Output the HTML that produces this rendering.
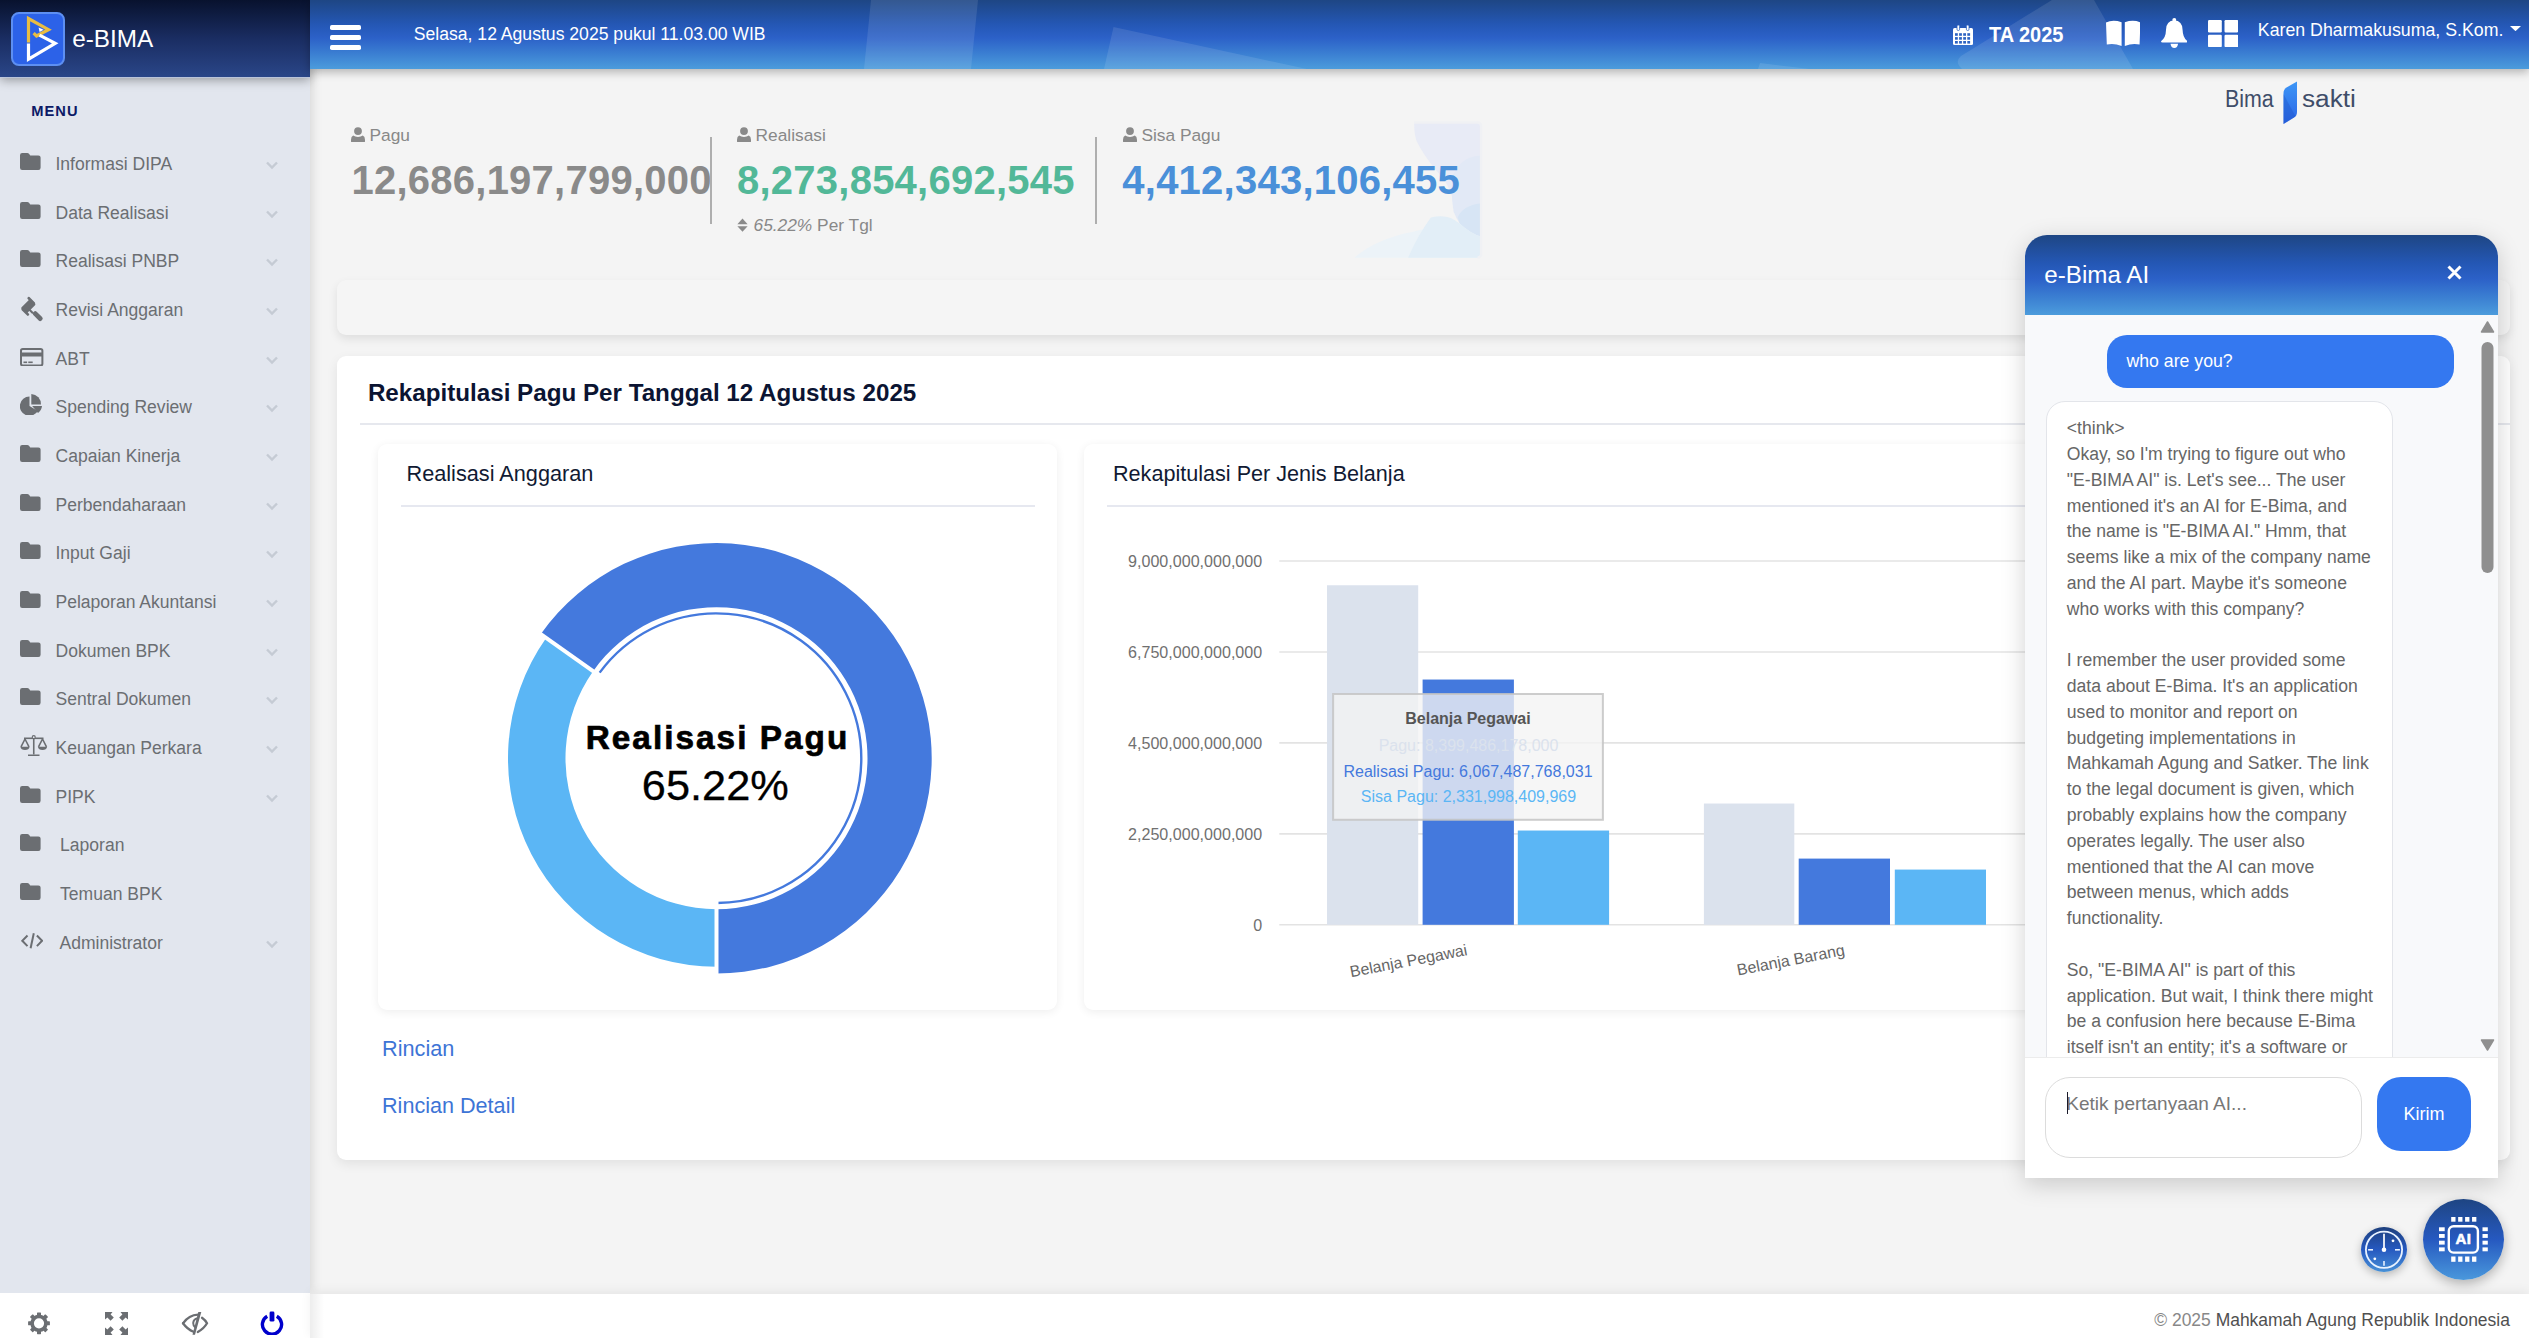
<!DOCTYPE html><html><head><meta charset="utf-8"><style>
html,body{margin:0;padding:0;}
body{width:2529px;height:1338px;position:relative;overflow:hidden;background:#f4f4f4;font-family:"Liberation Sans", sans-serif;}
.t{position:absolute;white-space:nowrap;}
.abs{position:absolute;}
</style></head><body>
<div class="abs" style="left:0;top:0;width:310px;height:1293px;background:#e2e6ee;box-shadow:2px 0 10px rgba(0,0,0,0.12);"></div>
<div class="abs" style="left:0;top:0;width:310px;height:77px;background:linear-gradient(180deg,#08122e 0%,#1a2d62 50%,#2a4688 100%);box-shadow:0 3px 10px rgba(0,0,0,0.35);"></div>
<div class="abs" style="left:0;top:77px;width:310px;height:1.2px;background:rgba(190,202,228,0.75);"></div>
<div class="abs" style="left:11px;top:12px;width:50px;height:50px;border:2px solid #5d8ff2;border-radius:8px;background:#2c62e8;"></div>
<svg style="position:absolute;left:0px;top:0px;" width="70" height="70" viewBox="0 0 70 70"><polyline points="28.5,42.5 28.5,18.5 48.5,29.6 36.5,36 33.6,33.2" fill="none" stroke="#e9bd42" stroke-width="3.2" stroke-linejoin="miter"/><polyline points="39.5,35.2 55.2,43.4 28.5,59.2 28.5,43.5" fill="none" stroke="#fff" stroke-width="3.2" stroke-linejoin="miter"/><path d="M38.6 27.4 L43.6 29.8 L39.6 31.9 Z" fill="#fff"/></svg>
<div class="t" style="left:72.20px;top:24.70px;font-size:24.3px;line-height:27px;color:#fff;">e-BIMA</div>
<div class="t" style="left:31.20px;top:102.80px;font-size:14.67px;line-height:16px;color:#0c1a66;font-weight:bold;letter-spacing:1.05px;">MENU</div>
<div class="t" style="left:55.50px;top:154.00px;font-size:17.55px;line-height:20px;color:#6b6e72;">Informasi DIPA</div>
<svg style="position:absolute;left:266.2px;top:161.0px;" width="12" height="9" viewBox="0 0 12 9"><path d="M1 1.5 L6 6.5 L11 1.5" fill="none" stroke="#c5cbd4" stroke-width="2.4"/></svg>
<svg style="position:absolute;left:20.2px;top:153.0px;" width="20.6" height="17" viewBox="0 0 20.6 17"><path d="M0 2.2 Q0 0 2.2 0 H7.2 Q8.4 0 9.2 1 L10.2 2.4 H18.4 Q20.6 2.4 20.6 4.6 V14.8 Q20.6 17 18.4 17 H2.2 Q0 17 0 14.8 Z" fill="#6b6e72"/></svg>
<div class="t" style="left:55.50px;top:202.67px;font-size:17.55px;line-height:20px;color:#6b6e72;">Data Realisasi</div>
<svg style="position:absolute;left:266.2px;top:209.667px;" width="12" height="9" viewBox="0 0 12 9"><path d="M1 1.5 L6 6.5 L11 1.5" fill="none" stroke="#c5cbd4" stroke-width="2.4"/></svg>
<svg style="position:absolute;left:20.2px;top:201.667px;" width="20.6" height="17" viewBox="0 0 20.6 17"><path d="M0 2.2 Q0 0 2.2 0 H7.2 Q8.4 0 9.2 1 L10.2 2.4 H18.4 Q20.6 2.4 20.6 4.6 V14.8 Q20.6 17 18.4 17 H2.2 Q0 17 0 14.8 Z" fill="#6b6e72"/></svg>
<div class="t" style="left:55.50px;top:251.33px;font-size:17.55px;line-height:20px;color:#6b6e72;">Realisasi PNBP</div>
<svg style="position:absolute;left:266.2px;top:258.334px;" width="12" height="9" viewBox="0 0 12 9"><path d="M1 1.5 L6 6.5 L11 1.5" fill="none" stroke="#c5cbd4" stroke-width="2.4"/></svg>
<svg style="position:absolute;left:20.2px;top:250.334px;" width="20.6" height="17" viewBox="0 0 20.6 17"><path d="M0 2.2 Q0 0 2.2 0 H7.2 Q8.4 0 9.2 1 L10.2 2.4 H18.4 Q20.6 2.4 20.6 4.6 V14.8 Q20.6 17 18.4 17 H2.2 Q0 17 0 14.8 Z" fill="#6b6e72"/></svg>
<div class="t" style="left:55.50px;top:300.00px;font-size:17.55px;line-height:20px;color:#6b6e72;">Revisi Anggaran</div>
<svg style="position:absolute;left:266.2px;top:307.001px;" width="12" height="9" viewBox="0 0 12 9"><path d="M1 1.5 L6 6.5 L11 1.5" fill="none" stroke="#c5cbd4" stroke-width="2.4"/></svg>
<svg style="position:absolute;left:16.3px;top:293.001px;" width="30" height="30" viewBox="0 0 30 30"><g fill="#6b6e72"><rect x="8.3" y="6.6" width="8" height="13.4" rx="1.2" transform="rotate(45 12.3 13.3)"/><rect x="5.6" y="5.9" width="9.6" height="2.6" rx="1" transform="rotate(45 12.3 13.3)"/><rect x="9.4" y="18.1" width="9.6" height="2.6" rx="1" transform="rotate(45 12.3 13.3)"/><rect x="13.5" y="14.3" width="2" height="7" transform="rotate(-45 14.5 17.8)"/><rect x="19.3" y="17.3" width="4.8" height="11.6" rx="2" transform="rotate(-45 21.7 23.1)"/></g></svg>
<div class="t" style="left:55.50px;top:348.67px;font-size:17.55px;line-height:20px;color:#6b6e72;">ABT</div>
<svg style="position:absolute;left:266.2px;top:355.668px;" width="12" height="9" viewBox="0 0 12 9"><path d="M1 1.5 L6 6.5 L11 1.5" fill="none" stroke="#c5cbd4" stroke-width="2.4"/></svg>
<svg style="position:absolute;left:20.3px;top:347.668px;" width="23.4" height="18.6" viewBox="0 0 23.4 18.6"><rect x="1" y="1" width="21.4" height="16.6" rx="1.8" fill="none" stroke="#6b6e72" stroke-width="2"/><rect x="1" y="4.5" width="21.4" height="4" fill="#6b6e72"/><rect x="3.5" y="13.5" width="3.6" height="1.6" fill="#6b6e72"/><rect x="8.3" y="13.5" width="4.4" height="1.6" fill="#6b6e72"/></svg>
<div class="t" style="left:55.50px;top:397.34px;font-size:17.55px;line-height:20px;color:#6b6e72;">Spending Review</div>
<svg style="position:absolute;left:266.2px;top:404.33500000000004px;" width="12" height="9" viewBox="0 0 12 9"><path d="M1 1.5 L6 6.5 L11 1.5" fill="none" stroke="#c5cbd4" stroke-width="2.4"/></svg>
<svg style="position:absolute;left:20px;top:393.83500000000004px;" width="22" height="21.2" viewBox="0 0 22 21.2"><path d="M9.5 2.6 V12 L17.8 16.9 A9.6 9.6 0 1 1 9.5 2.6 Z" fill="#6b6e72"/><path d="M11.3 0 A10.2 10.2 0 0 1 21 10.6 H11.3 Z" fill="#6b6e72"/><path d="M12.2 12 H22 A10 10 0 0 1 18 19 Z" fill="#6b6e72"/></svg>
<div class="t" style="left:55.50px;top:446.00px;font-size:17.55px;line-height:20px;color:#6b6e72;">Capaian Kinerja</div>
<svg style="position:absolute;left:266.2px;top:453.002px;" width="12" height="9" viewBox="0 0 12 9"><path d="M1 1.5 L6 6.5 L11 1.5" fill="none" stroke="#c5cbd4" stroke-width="2.4"/></svg>
<svg style="position:absolute;left:20.2px;top:445.002px;" width="20.6" height="17" viewBox="0 0 20.6 17"><path d="M0 2.2 Q0 0 2.2 0 H7.2 Q8.4 0 9.2 1 L10.2 2.4 H18.4 Q20.6 2.4 20.6 4.6 V14.8 Q20.6 17 18.4 17 H2.2 Q0 17 0 14.8 Z" fill="#6b6e72"/></svg>
<div class="t" style="left:55.50px;top:494.67px;font-size:17.55px;line-height:20px;color:#6b6e72;">Perbendaharaan</div>
<svg style="position:absolute;left:266.2px;top:501.669px;" width="12" height="9" viewBox="0 0 12 9"><path d="M1 1.5 L6 6.5 L11 1.5" fill="none" stroke="#c5cbd4" stroke-width="2.4"/></svg>
<svg style="position:absolute;left:20.2px;top:493.669px;" width="20.6" height="17" viewBox="0 0 20.6 17"><path d="M0 2.2 Q0 0 2.2 0 H7.2 Q8.4 0 9.2 1 L10.2 2.4 H18.4 Q20.6 2.4 20.6 4.6 V14.8 Q20.6 17 18.4 17 H2.2 Q0 17 0 14.8 Z" fill="#6b6e72"/></svg>
<div class="t" style="left:55.50px;top:543.34px;font-size:17.55px;line-height:20px;color:#6b6e72;">Input Gaji</div>
<svg style="position:absolute;left:266.2px;top:550.336px;" width="12" height="9" viewBox="0 0 12 9"><path d="M1 1.5 L6 6.5 L11 1.5" fill="none" stroke="#c5cbd4" stroke-width="2.4"/></svg>
<svg style="position:absolute;left:20.2px;top:542.336px;" width="20.6" height="17" viewBox="0 0 20.6 17"><path d="M0 2.2 Q0 0 2.2 0 H7.2 Q8.4 0 9.2 1 L10.2 2.4 H18.4 Q20.6 2.4 20.6 4.6 V14.8 Q20.6 17 18.4 17 H2.2 Q0 17 0 14.8 Z" fill="#6b6e72"/></svg>
<div class="t" style="left:55.50px;top:592.00px;font-size:17.55px;line-height:20px;color:#6b6e72;">Pelaporan Akuntansi</div>
<svg style="position:absolute;left:266.2px;top:599.003px;" width="12" height="9" viewBox="0 0 12 9"><path d="M1 1.5 L6 6.5 L11 1.5" fill="none" stroke="#c5cbd4" stroke-width="2.4"/></svg>
<svg style="position:absolute;left:20.2px;top:591.003px;" width="20.6" height="17" viewBox="0 0 20.6 17"><path d="M0 2.2 Q0 0 2.2 0 H7.2 Q8.4 0 9.2 1 L10.2 2.4 H18.4 Q20.6 2.4 20.6 4.6 V14.8 Q20.6 17 18.4 17 H2.2 Q0 17 0 14.8 Z" fill="#6b6e72"/></svg>
<div class="t" style="left:55.50px;top:640.67px;font-size:17.55px;line-height:20px;color:#6b6e72;">Dokumen BPK</div>
<svg style="position:absolute;left:266.2px;top:647.6700000000001px;" width="12" height="9" viewBox="0 0 12 9"><path d="M1 1.5 L6 6.5 L11 1.5" fill="none" stroke="#c5cbd4" stroke-width="2.4"/></svg>
<svg style="position:absolute;left:20.2px;top:639.6700000000001px;" width="20.6" height="17" viewBox="0 0 20.6 17"><path d="M0 2.2 Q0 0 2.2 0 H7.2 Q8.4 0 9.2 1 L10.2 2.4 H18.4 Q20.6 2.4 20.6 4.6 V14.8 Q20.6 17 18.4 17 H2.2 Q0 17 0 14.8 Z" fill="#6b6e72"/></svg>
<div class="t" style="left:55.50px;top:689.34px;font-size:17.55px;line-height:20px;color:#6b6e72;">Sentral Dokumen</div>
<svg style="position:absolute;left:266.2px;top:696.337px;" width="12" height="9" viewBox="0 0 12 9"><path d="M1 1.5 L6 6.5 L11 1.5" fill="none" stroke="#c5cbd4" stroke-width="2.4"/></svg>
<svg style="position:absolute;left:20.2px;top:688.337px;" width="20.6" height="17" viewBox="0 0 20.6 17"><path d="M0 2.2 Q0 0 2.2 0 H7.2 Q8.4 0 9.2 1 L10.2 2.4 H18.4 Q20.6 2.4 20.6 4.6 V14.8 Q20.6 17 18.4 17 H2.2 Q0 17 0 14.8 Z" fill="#6b6e72"/></svg>
<div class="t" style="left:55.50px;top:738.00px;font-size:17.55px;line-height:20px;color:#6b6e72;">Keuangan Perkara</div>
<svg style="position:absolute;left:266.2px;top:745.004px;" width="12" height="9" viewBox="0 0 12 9"><path d="M1 1.5 L6 6.5 L11 1.5" fill="none" stroke="#c5cbd4" stroke-width="2.4"/></svg>
<svg style="position:absolute;left:20px;top:734.7040000000001px;" width="27.5" height="21.6" viewBox="0 0 27.5 21.6"><g fill="none" stroke="#6b6e72" stroke-width="1.6"><path d="M13.75 3 V19.5"/><path d="M4 3.3 H23.5"/><path d="M8 20.3 H19.5"/><path d="M5 4 L1 11.8 M5 4 L9 11.8"/><path d="M22.5 4 L18.5 11.8 M22.5 4 L26.5 11.8"/></g><circle cx="13.75" cy="2.2" r="1.5" fill="#e2e6ee" stroke="#6b6e72" stroke-width="1.2"/><path d="M0.4 11.8 H9.6 Q9 15 5 15 Q1 15 0.4 11.8 Z" fill="#6b6e72"/><path d="M17.9 11.8 H27.1 Q26.5 15 22.5 15 Q18.5 15 17.9 11.8 Z" fill="#6b6e72"/></svg>
<div class="t" style="left:55.50px;top:786.67px;font-size:17.55px;line-height:20px;color:#6b6e72;">PIPK</div>
<svg style="position:absolute;left:266.2px;top:793.671px;" width="12" height="9" viewBox="0 0 12 9"><path d="M1 1.5 L6 6.5 L11 1.5" fill="none" stroke="#c5cbd4" stroke-width="2.4"/></svg>
<svg style="position:absolute;left:20.2px;top:785.671px;" width="20.6" height="17" viewBox="0 0 20.6 17"><path d="M0 2.2 Q0 0 2.2 0 H7.2 Q8.4 0 9.2 1 L10.2 2.4 H18.4 Q20.6 2.4 20.6 4.6 V14.8 Q20.6 17 18.4 17 H2.2 Q0 17 0 14.8 Z" fill="#6b6e72"/></svg>
<div class="t" style="left:60.10px;top:835.34px;font-size:17.55px;line-height:20px;color:#6b6e72;">Laporan</div>
<svg style="position:absolute;left:20.2px;top:834.338px;" width="20.6" height="17" viewBox="0 0 20.6 17"><path d="M0 2.2 Q0 0 2.2 0 H7.2 Q8.4 0 9.2 1 L10.2 2.4 H18.4 Q20.6 2.4 20.6 4.6 V14.8 Q20.6 17 18.4 17 H2.2 Q0 17 0 14.8 Z" fill="#6b6e72"/></svg>
<div class="t" style="left:60.10px;top:884.00px;font-size:17.55px;line-height:20px;color:#6b6e72;">Temuan BPK</div>
<svg style="position:absolute;left:20.2px;top:883.005px;" width="20.6" height="17" viewBox="0 0 20.6 17"><path d="M0 2.2 Q0 0 2.2 0 H7.2 Q8.4 0 9.2 1 L10.2 2.4 H18.4 Q20.6 2.4 20.6 4.6 V14.8 Q20.6 17 18.4 17 H2.2 Q0 17 0 14.8 Z" fill="#6b6e72"/></svg>
<div class="t" style="left:59.50px;top:932.67px;font-size:17.55px;line-height:20px;color:#6b6e72;">Administrator</div>
<svg style="position:absolute;left:266.2px;top:939.672px;" width="12" height="9" viewBox="0 0 12 9"><path d="M1 1.5 L6 6.5 L11 1.5" fill="none" stroke="#c5cbd4" stroke-width="2.4"/></svg>
<svg style="position:absolute;left:20.9px;top:933.172px;" width="22.4" height="15.6" viewBox="0 0 22.4 15.6"><g fill="none" stroke="#6b6e72" stroke-width="2"><path d="M6.5 2.5 L1.3 7.8 L6.5 13.1"/><path d="M15.9 2.5 L21.1 7.8 L15.9 13.1"/><path d="M12.8 0.3 L9.6 15.3"/></g></svg>
<div class="abs" style="left:0;top:1293px;width:310px;height:45px;background:#fff;"></div>
<svg style="position:absolute;left:26px;top:1311px;" width="26" height="25" viewBox="0 0 26 25"><g fill="#6b6e72"><rect x="11" y="1.4" width="4" height="5" rx="0.6" transform="rotate(0 13 12.3)"/><rect x="11" y="1.4" width="4" height="5" rx="0.6" transform="rotate(45 13 12.3)"/><rect x="11" y="1.4" width="4" height="5" rx="0.6" transform="rotate(90 13 12.3)"/><rect x="11" y="1.4" width="4" height="5" rx="0.6" transform="rotate(135 13 12.3)"/><rect x="11" y="1.4" width="4" height="5" rx="0.6" transform="rotate(180 13 12.3)"/><rect x="11" y="1.4" width="4" height="5" rx="0.6" transform="rotate(225 13 12.3)"/><rect x="11" y="1.4" width="4" height="5" rx="0.6" transform="rotate(270 13 12.3)"/><rect x="11" y="1.4" width="4" height="5" rx="0.6" transform="rotate(315 13 12.3)"/></g><circle cx="13" cy="12.3" r="6.9" fill="none" stroke="#6b6e72" stroke-width="3.6"/></svg>
<svg style="position:absolute;left:105px;top:1312px;" width="23" height="23" viewBox="0 0 23 23"><g fill="#6b6e72"><path d="M0 0 H7.5 L5.6 2.4 L8.8 5.6 L5.6 8.8 L2.4 5.6 L0 7.5 Z"/><path d="M23 0 V7.5 L20.6 5.6 L17.4 8.8 L14.2 5.6 L17.4 2.4 L15.5 0 Z"/><path d="M0 23 V15.5 L2.4 17.4 L5.6 14.2 L8.8 17.4 L5.6 20.6 L7.5 23 Z"/><path d="M23 23 H15.5 L17.4 20.6 L14.2 17.4 L17.4 14.2 L20.6 17.4 L23 15.5 Z"/></g></svg>
<svg style="position:absolute;left:180px;top:1310px;" width="30" height="27" viewBox="0 0 30 27"><g fill="none" stroke="#6b6e72" stroke-width="2.3" stroke-linecap="round"><path d="M3 13.3 Q9 4.8 18 4.6"/><path d="M3 13.3 Q7.5 19.5 13.5 21.8"/><path d="M17.6 8.2 Q13.5 9 13.2 13 Q13.2 16.2 15.4 17.6" stroke-width="2"/><path d="M22 7.8 Q25.6 10.4 27 13.3 Q24 18.6 17.8 22"/></g><path d="M18.3 2 L21.3 2 L15 24.8 L12.5 24.8 Z" fill="#6b6e72"/></svg>
<svg style="position:absolute;left:260px;top:1310px;" width="24" height="25" viewBox="0 0 24 25"><path d="M7.2 6.2 A9.6 9.6 0 1 0 16.8 6.2" fill="none" stroke="#0000cc" stroke-width="3.4"/><rect x="9.6" y="1.6" width="4.8" height="10" rx="1.4" fill="#0000cc"/></svg>
<div class="abs" style="left:310px;top:0;width:2219px;height:69px;background:linear-gradient(180deg,#1e4684 0%,#2457b4 35%,#2c61c8 55%,#3b7fd2 78%,#4c9cdc 100%);box-shadow:0 3px 9px rgba(0,0,0,0.28);overflow:hidden;"><svg width="2219" height="69" style="position:absolute;left:0;top:0"><g fill="#fff" fill-opacity="0.10"><polygon points="561,0 668,0 661,69 554,69"/><polygon points="803.5,27 997,69 794,69"/><polygon points="1450,63 1500,69 1448,69"/><path d="M1742 0 L1784 0 L1823 69 L1652 69 Q1644 62 1651 56 Z"/></g></svg></div>
<div class="abs" style="left:330px;top:25px;width:31px;height:5px;border-radius:1.8px;background:#fff;"></div>
<div class="abs" style="left:330px;top:35px;width:31px;height:5px;border-radius:1.8px;background:#fff;"></div>
<div class="abs" style="left:330px;top:45px;width:31px;height:5px;border-radius:1.8px;background:#fff;"></div>
<div class="t" style="left:413.80px;top:24.20px;font-size:17.6px;line-height:20px;color:#fff;">Selasa, 12 Agustus 2025 pukul 11.03.00 WIB</div>
<svg style="position:absolute;left:1953px;top:24.6px;" width="20" height="20" viewBox="0 0 20 20"><g fill="#fff"><rect x="0" y="3" width="20" height="17" rx="1.5"/></g><g fill="#2d63c2"><rect x="2.0" y="8.2" width="2.8" height="2.6"/><rect x="6.1" y="8.2" width="2.8" height="2.6"/><rect x="10.2" y="8.2" width="2.8" height="2.6"/><rect x="14.299999999999999" y="8.2" width="2.8" height="2.6"/><rect x="2.0" y="12.1" width="2.8" height="2.6"/><rect x="6.1" y="12.1" width="2.8" height="2.6"/><rect x="10.2" y="12.1" width="2.8" height="2.6"/><rect x="14.299999999999999" y="12.1" width="2.8" height="2.6"/><rect x="2.0" y="16.0" width="2.8" height="2.6"/><rect x="6.1" y="16.0" width="2.8" height="2.6"/><rect x="10.2" y="16.0" width="2.8" height="2.6"/><rect x="14.299999999999999" y="16.0" width="2.8" height="2.6"/></g><rect x="4" y="0" width="2.6" height="5.5" rx="1.2" fill="#fff" stroke="#2d63c2" stroke-width="0.8"/><rect x="13.4" y="0" width="2.6" height="5.5" rx="1.2" fill="#fff" stroke="#2d63c2" stroke-width="0.8"/></svg>
<div class="t" style="left:1989.00px;top:23.60px;font-size:20px;line-height:22px;color:#fff;font-weight:bold;transform:scaleY(1.06);transform-origin:0 18px;">TA 2025</div>
<svg style="position:absolute;left:2105.8px;top:20px;" width="34.4" height="26" viewBox="0 0 34.4 26"><g fill="#fff"><path d="M0 2.4 Q7 -0.6 15.6 2.2 V26 Q8 23 0.8 24.6 Z"/><path d="M34.4 2.4 Q27.4 -0.6 18.8 2.2 V26 Q26.4 23 33.6 24.6 Z"/></g></svg>
<svg style="position:absolute;left:2160.8px;top:17.8px;" width="26.6" height="30" viewBox="0 0 26.6 30"><g fill="#fff"><circle cx="13.3" cy="2" r="2"/><path d="M13.3 2.5 Q5.2 2.5 5 12 Q4.8 20 0 23.2 Q0 24.5 1.5 24.5 H25.1 Q26.6 24.5 26.6 23.2 Q21.8 20 21.6 12 Q21.4 2.5 13.3 2.5 Z"/><path d="M9.5 25.8 H17.1 Q16.5 30 13.3 30 Q10.1 30 9.5 25.8 Z"/></g></svg>
<svg style="position:absolute;left:2207.7px;top:19.9px;" width="30.3" height="27.2" viewBox="0 0 30.3 27.2"><g fill="#fff"><rect x="0" y="0" width="13.8" height="12.4" rx="1.2"/><rect x="16.5" y="0" width="13.8" height="12.4" rx="1.2"/><rect x="0" y="14.8" width="13.8" height="12.4" rx="1.2"/><rect x="16.5" y="14.8" width="13.8" height="12.4" rx="1.2"/></g></svg>
<div class="t" style="left:2257.80px;top:20.00px;font-size:17.75px;line-height:20px;color:#fff;">Karen Dharmakusuma, S.Kom.</div>
<svg style="position:absolute;left:2509.5px;top:25.8px;" width="11" height="5.2" viewBox="0 0 11 5.2"><path d="M0 0 H11 L5.5 5.2 Z" fill="#fff"/></svg>
<div class="t" style="left:2225.2px;top:85.9px;font-size:23px;line-height:26px;color:#3f4d69;transform-origin:0 0;transform:scaleX(0.93);">Bima</div>
<div class="t" style="left:2302px;top:85.9px;font-size:23px;line-height:26px;color:#3f4d69;transform-origin:0 0;transform:scaleX(1.14);">sakti</div>
<svg style="position:absolute;left:2282.5px;top:80.5px;" width="15" height="43.5" viewBox="0 0 15 43.5"><defs><linearGradient id="bsg" x1="0" y1="0" x2="0" y2="1"><stop offset="0" stop-color="#3d96f6"/><stop offset="1" stop-color="#2a64e6"/></linearGradient></defs><path d="M14 0.5 V31 Q14 34.5 11 36.5 L0.5 43 V12 Q0.5 8.5 3.5 6.5 Z" fill="url(#bsg)"/><path d="M0.5 13 L12.6 35.6 L0.5 43 Z" fill="#1f55c8" fill-opacity="0.4"/></svg>
<svg style="position:absolute;left:351px;top:127px;" width="14" height="15.4" viewBox="0 0 14 15.4"><path d="M7 0.2 A3.9 3.9 0 1 1 7 8 A3.9 3.9 0 1 1 7 0.2 Z M2.2 8.6 Q4 10 7 10 Q10 10 11.8 8.6 Q14 9.6 14 12.8 V14.2 Q14 15.4 12.8 15.4 H1.2 Q0 15.4 0 14.2 V12.8 Q0 9.6 2.2 8.6 Z" fill="#8a8a8a"/></svg>
<div class="t" style="left:369.50px;top:125.10px;font-size:17.33px;line-height:20px;color:#888;">Pagu</div>
<div class="t" style="left:351.50px;top:158.10px;font-size:40px;line-height:44px;color:#8a8a8a;font-weight:bold;letter-spacing:0.24px;">12,686,197,799,000</div>
<div class="abs" style="left:709.8px;top:137px;width:2px;height:87px;background:#aeaeae;"></div>
<svg style="position:absolute;left:736.6px;top:127px;" width="14" height="15.4" viewBox="0 0 14 15.4"><path d="M7 0.2 A3.9 3.9 0 1 1 7 8 A3.9 3.9 0 1 1 7 0.2 Z M2.2 8.6 Q4 10 7 10 Q10 10 11.8 8.6 Q14 9.6 14 12.8 V14.2 Q14 15.4 12.8 15.4 H1.2 Q0 15.4 0 14.2 V12.8 Q0 9.6 2.2 8.6 Z" fill="#8a8a8a"/></svg>
<div class="t" style="left:755.50px;top:125.10px;font-size:17.33px;line-height:20px;color:#888;">Realisasi</div>
<div class="t" style="left:737.00px;top:158.10px;font-size:40px;line-height:44px;color:#52b898;font-weight:bold;letter-spacing:0.24px;">8,273,854,692,545</div>
<svg style="position:absolute;left:736.6px;top:217.8px;" width="11" height="14.4" viewBox="0 0 11 14.4"><g fill="#8a8a8a"><path d="M0.4 6.2 L5.5 0.6 L10.6 6.2 Z"/><path d="M0.4 8.2 L5.5 13.8 L10.6 8.2 Z"/></g></svg>
<div class="t" style="left:753.50px;top:214.50px;font-size:17.33px;line-height:20px;color:#888;"><i>65.22%</i> Per Tgl</div>
<div class="abs" style="left:1094.8px;top:137px;width:2px;height:87px;background:#aeaeae;"></div>
<svg style="position:absolute;left:1122.5px;top:127px;" width="14" height="15.4" viewBox="0 0 14 15.4"><path d="M7 0.2 A3.9 3.9 0 1 1 7 8 A3.9 3.9 0 1 1 7 0.2 Z M2.2 8.6 Q4 10 7 10 Q10 10 11.8 8.6 Q14 9.6 14 12.8 V14.2 Q14 15.4 12.8 15.4 H1.2 Q0 15.4 0 14.2 V12.8 Q0 9.6 2.2 8.6 Z" fill="#8a8a8a"/></svg>
<div class="t" style="left:1141.40px;top:125.10px;font-size:17.33px;line-height:20px;color:#888;">Sisa Pagu</div>
<svg style="position:absolute;left:1340px;top:110px;" width="160" height="160" viewBox="0 0 1338 1338"><path d="M620 105 H1150 Q1180 105 1180 135 V1060 Q1100 1040 1000 950 Q950 850 940 730 Q900 600 800 500 Q700 380 640 260 Q620 200 620 105 Z" fill="#e8ebf6"/><path d="M1180 380 Q1000 390 940 560 Q925 700 950 850 Q990 960 1100 1040 L1180 1060 Z" fill="#e2e9f6"/><path d="M1180 780 Q1020 800 985 900 Q1000 990 1100 1040 L1180 1060 Z" fill="#d7e5f5"/><path d="M120 1235 Q300 1080 600 1020 Q850 960 1000 950 Q1100 1040 1180 1060 V1205 Q1180 1235 1150 1235 Z" fill="#ecf3f8"/><path d="M570 1235 Q650 1050 760 900 Q900 860 1000 950 Q1100 1040 1180 1060 V1205 Q1180 1235 1150 1235 Z" fill="#e2eef7"/><path d="M620 105 H1150 Q1180 105 1180 135 V1205 Q1180 1235 1150 1235" fill="none" stroke="#f0f1f4" stroke-width="20"/></svg>
<div class="t" style="left:1122.30px;top:158.10px;font-size:40px;line-height:44px;color:#4a90d9;font-weight:bold;letter-spacing:0.24px;">4,412,343,106,455</div>
<div class="abs" style="left:337px;top:279.5px;width:2173px;height:55px;border-radius:9px;background:#f5f5f5;box-shadow:0 4px 10px rgba(0,0,0,0.09);"></div>
<div class="abs" style="left:337px;top:356px;width:2173px;height:803.5px;border-radius:9px;background:#fff;box-shadow:0 4px 12px rgba(0,0,0,0.08);"></div>
<div class="t" style="left:367.90px;top:378.50px;font-size:24.19px;line-height:27px;color:#0b1432;font-weight:bold;">Rekapitulasi Pagu Per Tanggal 12 Agustus 2025</div>
<div class="abs" style="left:360px;top:423px;width:2150px;height:2px;background:#e6e8ee;"></div>
<div class="abs" style="left:378px;top:444px;width:679px;height:566px;border-radius:9px;background:#fff;box-shadow:0 2px 10px rgba(0,0,0,0.07);"></div>
<div class="abs" style="left:1084px;top:443.5px;width:1410px;height:566px;border-radius:9px;background:#fff;box-shadow:0 2px 10px rgba(0,0,0,0.07);"></div>
<div class="t" style="left:406.50px;top:460.70px;font-size:21.7px;line-height:25px;color:#111a33;">Realisasi Anggaran</div>
<div class="abs" style="left:401px;top:504.5px;width:634px;height:2px;background:#e6e8f0;"></div>
<div class="t" style="left:1113.00px;top:460.70px;font-size:21.6px;line-height:25px;color:#111a33;">Rekapitulasi Per Jenis Belanja</div>
<div class="abs" style="left:1107px;top:504.5px;width:1380px;height:2px;background:#e6e8f0;"></div>
<div class="t" style="left:382.00px;top:1036.20px;font-size:21.7px;line-height:25px;color:#3d74d6;">Rincian</div>
<div class="t" style="left:382.00px;top:1092.90px;font-size:21.6px;line-height:25px;color:#3d74d6;">Rincian Detail</div>
<svg class="abs" style="left:0;top:0;position:absolute" width="1060" height="1010"><path d="M716.50 966.70 A208.5 208.5 0 0 1 546.14 637.99 L593.12 671.14 A151 151 0 0 0 716.50 909.20 Z" fill="#5bb6f5"/><path d="M540.67 634.13 A215.2 215.2 0 1 1 716.50 973.40 L716.50 909.20 A151 151 0 1 0 593.12 671.14 Z" fill="#4479dd"/><path d="M599.66 672.66 A144.8 144.8 0 1 1 717.01 903.00" fill="none" stroke="#4479dd" stroke-width="2.4"/><line x1="716.50" y1="878.20" x2="716.50" y2="983.20" stroke="#fff" stroke-width="4"/><line x1="618.45" y1="689.01" x2="532.66" y2="628.48" stroke="#fff" stroke-width="4"/></svg>
<div class="t" style="left:716.50px;transform:translateX(-50%);top:718.80px;font-size:33.3px;line-height:37px;color:#000;font-weight:bold;letter-spacing:2.05px;text-indent:2.05px;-webkit-text-stroke:0.7px #000;">Realisasi Pagu</div>
<div class="t" style="left:715.30px;transform:translateX(-50%);top:760.70px;font-size:43.3px;line-height:48px;color:#000;-webkit-text-stroke:0.3px #000;">65.22%</div>
<svg style="position:absolute;left:0;top:0;font-family:"Liberation Sans", sans-serif" width="2529" height="1010"><line x1="1279.3" y1="561.00" x2="2470" y2="561.00" stroke="#e3e3e3" stroke-width="1.6"/><text x="1262.2" y="566.70" text-anchor="end" font-size="16.08" fill="#707070">9,000,000,000,000</text><line x1="1279.3" y1="651.95" x2="2470" y2="651.95" stroke="#e3e3e3" stroke-width="1.6"/><text x="1262.2" y="657.65" text-anchor="end" font-size="16.08" fill="#707070">6,750,000,000,000</text><line x1="1279.3" y1="742.90" x2="2470" y2="742.90" stroke="#e3e3e3" stroke-width="1.6"/><text x="1262.2" y="748.60" text-anchor="end" font-size="16.08" fill="#707070">4,500,000,000,000</text><line x1="1279.3" y1="833.85" x2="2470" y2="833.85" stroke="#e3e3e3" stroke-width="1.6"/><text x="1262.2" y="839.55" text-anchor="end" font-size="16.08" fill="#707070">2,250,000,000,000</text><line x1="1279.3" y1="924.80" x2="2470" y2="924.80" stroke="#e3e3e3" stroke-width="1.6"/><text x="1262.2" y="930.50" text-anchor="end" font-size="16.08" fill="#707070">0</text><rect x="1327" y="585.27" width="91.20000000000005" height="339.53" fill="#dbe2ed"/><rect x="1422.6" y="679.54" width="91.30000000000018" height="245.26" fill="#4479dd"/><rect x="1517.8" y="830.54" width="91.29999999999995" height="94.26" fill="#5bb6f5"/><rect x="1703.9" y="803.53" width="90.39999999999986" height="121.27" fill="#dbe2ed"/><rect x="1798.7" y="858.59" width="91.29999999999995" height="66.21" fill="#4479dd"/><rect x="1894.8" y="869.58" width="91.20000000000005" height="55.22" fill="#5bb6f5"/><rect x="2080.5" y="904.59" width="90.5" height="20.21" fill="#dbe2ed"/><rect x="2175.5" y="912.67" width="90.5" height="12.13" fill="#4479dd"/><rect x="2271" y="916.72" width="91" height="8.08" fill="#5bb6f5"/><text x="1468" y="955" text-anchor="end" font-size="16" fill="#666" transform="rotate(-10.8 1468 955)">Belanja Pegawai</text><text x="1845.5" y="955" text-anchor="end" font-size="16" fill="#666" transform="rotate(-10.8 1845.5 955)">Belanja Barang</text><rect x="1333.1" y="694" width="269.8" height="125.8" fill="#f3f3f3" fill-opacity="0.78" stroke="#c4c4c4" stroke-opacity="0.85" stroke-width="2"/><text x="1468" y="723.9" text-anchor="middle" font-size="16" font-weight="bold" fill="#555">Belanja Pegawai</text><text x="1468.5" y="751.2" text-anchor="middle" font-size="16" fill="#dbe2ed">Pagu: 8,399,486,178,000</text><text x="1468" y="776.7" text-anchor="middle" font-size="16" fill="#4479dd">Realisasi Pagu: 6,067,487,768,031</text><text x="1468.5" y="802.2" text-anchor="middle" font-size="16" fill="#5bb6f5">Sisa Pagu: 2,331,998,409,969</text></svg>
<div class="abs" style="left:2025px;top:235px;width:473px;height:943px;border-radius:22px 22px 0 0;background:#f8f9fb;box-shadow:0 6px 24px rgba(0,0,0,0.18);overflow:hidden;"><div class="abs" style="left:0;top:0;width:473px;height:80px;background:linear-gradient(180deg,#1e4684 0%,#2457b4 35%,#2c61c8 55%,#3b7fd2 78%,#4c9cdc 100%);"></div><div class="abs" style="left:0;top:822px;width:473px;height:121px;background:#fff;border-top:1px solid #ececec;"></div></div>
<div class="t" style="left:2044.30px;top:261.10px;font-size:24.2px;line-height:27px;color:#fff;">e-Bima AI</div>
<svg style="position:absolute;left:2446.5px;top:264.5px;" width="15" height="15" viewBox="0 0 15 15"><path d="M1.5 1.5 L13.5 13.5 M13.5 1.5 L1.5 13.5" stroke="#fff" stroke-width="3" stroke-linecap="butt"/></svg>
<div class="abs" style="left:2107px;top:335px;width:347px;height:52.5px;border-radius:20px;background:#3478f0;"></div>
<div class="t" style="left:2126.50px;top:351.20px;font-size:17.7px;line-height:20px;color:#fff;">who are you?</div>
<div class="abs" style="left:2025px;top:315px;width:450px;height:742px;overflow:hidden;"><div class="abs" style="left:20.5px;top:86px;width:345px;height:900px;border:1px solid #e3e5ea;border-radius:19px;background:#fff;"></div></div>
<div class="abs" style="left:2025px;top:315px;width:450px;height:742px;overflow:hidden;"><div class="t" style="left:41.8px;top:103px;font-size:17.6px;line-height:20px;color:#666;">&lt;think&gt;</div><div class="t" style="left:41.8px;top:129px;font-size:17.6px;line-height:20px;color:#666;">Okay, so I'm trying to figure out who</div><div class="t" style="left:41.8px;top:155px;font-size:17.6px;line-height:20px;color:#666;">"E-BIMA AI" is. Let's see... The user</div><div class="t" style="left:41.8px;top:181px;font-size:17.6px;line-height:20px;color:#666;">mentioned it's an AI for E-Bima, and</div><div class="t" style="left:41.8px;top:206px;font-size:17.6px;line-height:20px;color:#666;">the name is "E-BIMA AI." Hmm, that</div><div class="t" style="left:41.8px;top:232px;font-size:17.6px;line-height:20px;color:#666;">seems like a mix of the company name</div><div class="t" style="left:41.8px;top:258px;font-size:17.6px;line-height:20px;color:#666;">and the AI part. Maybe it's someone</div><div class="t" style="left:41.8px;top:284px;font-size:17.6px;line-height:20px;color:#666;">who works with this company?</div><div class="t" style="left:41.8px;top:310px;font-size:17.6px;line-height:20px;color:#666;"></div><div class="t" style="left:41.8px;top:335px;font-size:17.6px;line-height:20px;color:#666;">I remember the user provided some</div><div class="t" style="left:41.8px;top:361px;font-size:17.6px;line-height:20px;color:#666;">data about E-Bima. It's an application</div><div class="t" style="left:41.8px;top:387px;font-size:17.6px;line-height:20px;color:#666;">used to monitor and report on</div><div class="t" style="left:41.8px;top:413px;font-size:17.6px;line-height:20px;color:#666;">budgeting implementations in</div><div class="t" style="left:41.8px;top:438px;font-size:17.6px;line-height:20px;color:#666;">Mahkamah Agung and Satker. The link</div><div class="t" style="left:41.8px;top:464px;font-size:17.6px;line-height:20px;color:#666;">to the legal document is given, which</div><div class="t" style="left:41.8px;top:490px;font-size:17.6px;line-height:20px;color:#666;">probably explains how the company</div><div class="t" style="left:41.8px;top:516px;font-size:17.6px;line-height:20px;color:#666;">operates legally. The user also</div><div class="t" style="left:41.8px;top:542px;font-size:17.6px;line-height:20px;color:#666;">mentioned that the AI can move</div><div class="t" style="left:41.8px;top:567px;font-size:17.6px;line-height:20px;color:#666;">between menus, which adds</div><div class="t" style="left:41.8px;top:593px;font-size:17.6px;line-height:20px;color:#666;">functionality.</div><div class="t" style="left:41.8px;top:619px;font-size:17.6px;line-height:20px;color:#666;"></div><div class="t" style="left:41.8px;top:645px;font-size:17.6px;line-height:20px;color:#666;">So, "E-BIMA AI" is part of this</div><div class="t" style="left:41.8px;top:671px;font-size:17.6px;line-height:20px;color:#666;">application. But wait, I think there might</div><div class="t" style="left:41.8px;top:696px;font-size:17.6px;line-height:20px;color:#666;">be a confusion here because E-Bima</div><div class="t" style="left:41.8px;top:722px;font-size:17.6px;line-height:20px;color:#666;">itself isn't an entity; it's a software or</div></div>
<svg style="position:absolute;left:2477px;top:320px;" width="20" height="740" viewBox="0 0 20 740"><path d="M4.5 12 L10.5 2 L16.5 12 Z" fill="#8f8f8f" stroke="#8f8f8f" stroke-width="1.5" stroke-linejoin="round"/><rect x="4.5" y="22" width="12" height="231" rx="6" fill="#8f8f8f"/><path d="M4.5 720 L10.5 730 L16.5 720 Z" fill="#8f8f8f" stroke="#8f8f8f" stroke-width="1.5" stroke-linejoin="round"/></svg>
<div class="abs" style="left:2045.2px;top:1077px;width:315.3px;height:78.7px;border:1px solid #dcdcdc;border-radius:25px;background:#fff;"></div>
<div class="t" style="left:2066.30px;top:1092.80px;font-size:19px;line-height:21px;color:#777;">Ketik pertanyaan AI...</div>
<div class="abs" style="left:2067px;top:1092px;width:1.4px;height:21.8px;background:#1a1a2a;"></div>
<div class="abs" style="left:2377.3px;top:1077px;width:94px;height:73.5px;border-radius:24px;background:#3478f0;"></div>
<div class="t" style="left:2424.00px;transform:translateX(-50%);top:1103.60px;font-size:18.0px;line-height:20px;color:#fff;">Kirim</div>
<div class="abs" style="left:310px;top:1293.5px;width:2219px;height:45px;background:#fff;box-shadow:0 -3px 10px rgba(0,0,0,0.06);"></div>
<div class="abs" style="left:310px;top:1293.5px;width:14px;height:45px;background:linear-gradient(90deg,rgba(0,0,0,0.07),rgba(0,0,0,0));"></div>
<div class="t" style="left:2154.20px;top:1309.80px;font-size:17.48px;line-height:20px;color:#505050;"><span style="color:#888">© 2025</span> Mahkamah Agung Republik Indonesia</div>
<div class="abs" style="left:2361.2px;top:1227px;width:45.6px;height:45px;border-radius:50%;background:linear-gradient(180deg,#1d3f7c 0%,#2659c0 50%,#4790d6 100%);box-shadow:0 3px 8px rgba(0,0,0,0.25);"></div>
<svg style="position:absolute;left:2356px;top:1222px;" width="56" height="56" viewBox="0 0 56 56"><circle cx="28" cy="27.8" r="18.1" fill="none" stroke="#e8f2ff" stroke-width="1.8"/><g stroke="#e8f2ff" stroke-width="1.6"><line x1="12.1" y1="27.8" x2="17" y2="27.8"/><line x1="39" y1="27.8" x2="43.9" y2="27.8"/><line x1="28" y1="39" x2="28" y2="43.7"/></g><g fill="#fff"><circle cx="37" cy="18.8" r="1.4"/><circle cx="18.8" cy="36.8" r="1.4"/></g><line x1="28" y1="11.7" x2="28" y2="27.8" stroke="#fff" stroke-width="1.7"/><circle cx="28" cy="27.8" r="2.3" fill="#fff"/></svg>
<div class="abs" style="left:2423.3px;top:1199px;width:81px;height:81px;border-radius:50%;background:linear-gradient(180deg,#1e4582 0%,#2659c0 50%,#4a98dc 100%);box-shadow:0 4px 12px rgba(0,0,0,0.28);"></div>
<svg style="position:absolute;left:2420px;top:1196px;" width="88" height="88" viewBox="0 0 88 88"><rect x="28.8" y="30.2" width="29.1" height="26.4" rx="4.8" fill="none" stroke="#fff" stroke-width="2.4"/><text x="43.4" y="48.2" text-anchor="middle" font-size="15" font-weight="bold" fill="#fff" stroke="#fff" stroke-width="0.6" letter-spacing="0.3" font-family="Liberation Sans">AI</text><g fill="#fff"><rect x="31.20" y="21" width="4.3" height="4.7"/><rect x="31.20" y="60.5" width="4.3" height="5.3"/><rect x="38.15" y="21" width="4.3" height="4.7"/><rect x="38.15" y="60.5" width="4.3" height="5.3"/><rect x="45.10" y="21" width="4.3" height="4.7"/><rect x="45.10" y="60.5" width="4.3" height="5.3"/><rect x="52.05" y="21" width="4.3" height="4.7"/><rect x="52.05" y="60.5" width="4.3" height="5.3"/><rect x="19" y="31.30" width="5.7" height="3.9"/><rect x="62.5" y="31.30" width="5.3" height="3.9"/><rect x="19" y="38.00" width="5.7" height="3.9"/><rect x="62.5" y="38.00" width="5.3" height="3.9"/><rect x="19" y="44.70" width="5.7" height="3.9"/><rect x="62.5" y="44.70" width="5.3" height="3.9"/><rect x="19" y="51.40" width="5.7" height="3.9"/><rect x="62.5" y="51.40" width="5.3" height="3.9"/></g></svg>
</body></html>
